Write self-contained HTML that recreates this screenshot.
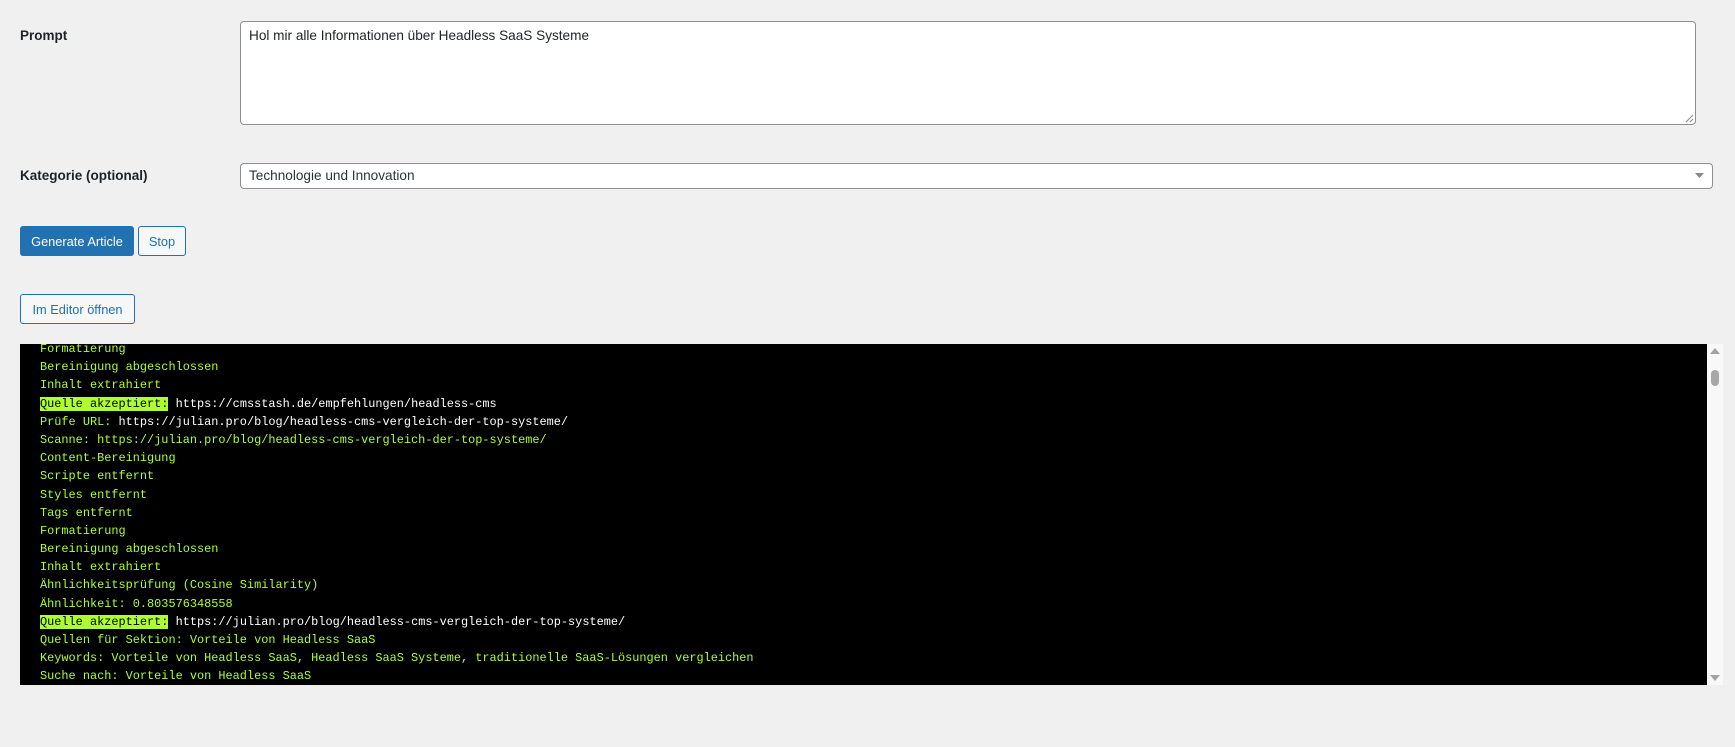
<!DOCTYPE html>
<html><head><style>
body{margin:0;background:#f0f0f1;width:1735px;height:747px;overflow:hidden;font-family:"Liberation Sans",sans-serif;color:#1d2327;position:relative}
.lbl{position:absolute;left:20px;font-size:13.5px;font-weight:600}
.ta{position:absolute;left:240px;top:21px;width:1456px;height:104px;background:#fff;border:1px solid #8c8f94;border-radius:4px;font-size:13.6px;box-sizing:border-box;padding:6px 8px}
.sel{position:absolute;left:240px;top:163px;width:1473px;height:26px;background:#fff;border:1px solid #8c8f94;border-radius:4px;font-size:13.6px;box-sizing:border-box;padding:4px 8px;color:#2c3338}
.btn{position:absolute;box-sizing:border-box;font-size:12.8px;border-radius:3px;display:flex;align-items:center;justify-content:center}
.pri{background:#2271b1;color:#fff;border:1px solid #2271b1}
.sec{background:#f6f7f7;color:#2271b1;border:1px solid #2271b1}
.term{position:absolute;left:20px;top:344px;width:1687px;height:341px;background:#000;overflow:hidden;font-family:"Liberation Mono",monospace;font-size:11.9px;color:#adff2f}
.term div{height:18.2px;line-height:18.2px;padding-left:20px;white-space:pre}
.hl{background:#adff2f;color:#000}
.w{color:#fff}
.sb{position:absolute;left:1707px;top:344px;width:16px;height:341px;background:#f8f8f8}
</style></head><body>
<div class="lbl" style="top:28px">Prompt</div>
<div class="ta">Hol mir alle Informationen über Headless SaaS Systeme
<svg style="position:absolute;right:1px;bottom:1px" width="9" height="9"><path d="M8 1L1 8M8 5L5 8" stroke="#888" stroke-width="1"/></svg></div>
<div class="lbl" style="top:168px">Kategorie (optional)</div>
<div class="sel">Technologie und Innovation<svg style="position:absolute;right:8px;top:9px" width="9" height="6"><path d="M0 0h9L4.5 5z" fill="#888"/></svg></div>
<div class="btn pri" style="left:20px;top:226px;width:114px;height:30px">Generate Article</div>
<div class="btn sec" style="left:138px;top:226px;width:48px;height:30px">Stop</div>
<div class="btn sec" style="left:20px;top:294px;width:115px;height:30px">Im Editor öffnen</div>
<div class="term"><div style="margin-top:-4px">Formatierung</div><div>Bereinigung abgeschlossen</div><div>Inhalt extrahiert</div><div><span class="hl">Quelle akzeptiert:</span> <span class="w">https://cmsstash.de/empfehlungen/headless-cms</span></div><div>Prüfe URL: <span class="w">https://julian.pro/blog/headless-cms-vergleich-der-top-systeme/</span></div><div>Scanne: https://julian.pro/blog/headless-cms-vergleich-der-top-systeme/</div><div>Content-Bereinigung</div><div>Scripte entfernt</div><div>Styles entfernt</div><div>Tags entfernt</div><div>Formatierung</div><div>Bereinigung abgeschlossen</div><div>Inhalt extrahiert</div><div>Ähnlichkeitsprüfung (Cosine Similarity)</div><div>Ähnlichkeit: 0.803576348558</div><div><span class="hl">Quelle akzeptiert:</span> <span class="w">https://julian.pro/blog/headless-cms-vergleich-der-top-systeme/</span></div><div>Quellen für Sektion: Vorteile von Headless SaaS</div><div>Keywords: Vorteile von Headless SaaS, Headless SaaS Systeme, traditionelle SaaS-Lösungen vergleichen</div><div>Suche nach: Vorteile von Headless SaaS</div></div>
<div class="sb"><svg style="position:absolute;left:3px;top:4px" width="10" height="6"><path d="M0 6h10L5 0z" fill="#a3a3a3"/></svg><div style="position:absolute;left:4px;top:26px;width:8px;height:16px;background:#a8a8a8;border-radius:4px"></div><svg style="position:absolute;left:3px;bottom:4px" width="10" height="6"><path d="M0 0h10L5 6z" fill="#a3a3a3"/></svg></div>
</body></html>
